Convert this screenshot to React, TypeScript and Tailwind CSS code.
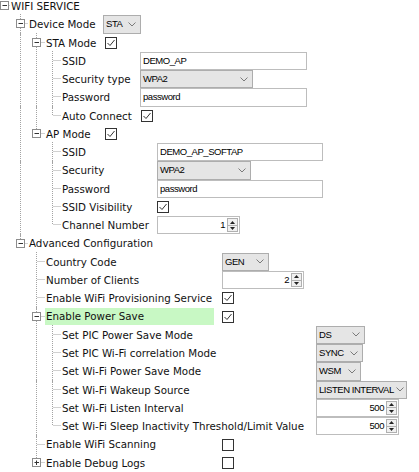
import React from 'react'

type Ctrl =
  | { kind: 'combo'; value: string; w: string }
  | { kind: 'input'; value: string; w: string }
  | { kind: 'spin'; value: string; w: string }
  | { kind: 'check'; checked: boolean }

type Node = {
  label: string
  labelW?: string
  ctrl?: Ctrl
  open?: boolean
  highlight?: boolean
  children?: Node[]
}

const tree: Node = {
  label: 'WIFI SERVICE',
  open: true,
  children: [
    {
      label: 'Device Mode',
      labelW: 'w-[103px]',
      ctrl: { kind: 'combo', value: 'STA', w: 'w-[38px]' },
      open: true,
      children: [
        {
          label: 'STA Mode',
          labelW: 'w-[105px]',
          ctrl: { kind: 'check', checked: true },
          open: true,
          children: [
            { label: 'SSID', labelW: 'w-[140px]', ctrl: { kind: 'input', value: 'DEMO_AP', w: 'w-[167px]' } },
            { label: 'Security type', labelW: 'w-[140px]', ctrl: { kind: 'combo', value: 'WPA2', w: 'w-[113px]' } },
            { label: 'Password', labelW: 'w-[140px]', ctrl: { kind: 'input', value: 'password', w: 'w-[167px]' } },
            { label: 'Auto Connect', labelW: 'w-[141px]', ctrl: { kind: 'check', checked: true } },
          ],
        },
        {
          label: 'AP Mode',
          labelW: 'w-[105px]',
          ctrl: { kind: 'check', checked: true },
          open: true,
          children: [
            { label: 'SSID', labelW: 'w-[157px]', ctrl: { kind: 'input', value: 'DEMO_AP_SOFTAP', w: 'w-[166px]' } },
            { label: 'Security', labelW: 'w-[157px]', ctrl: { kind: 'combo', value: 'WPA2', w: 'w-[94px]' } },
            { label: 'Password', labelW: 'w-[157px]', ctrl: { kind: 'input', value: 'password', w: 'w-[166px]' } },
            { label: 'SSID Visibility', labelW: 'w-[157px]', ctrl: { kind: 'check', checked: true } },
            { label: 'Channel Number', labelW: 'w-[157px]', ctrl: { kind: 'spin', value: '1', w: 'w-[83px]' } },
          ],
        },
      ],
    },
    {
      label: 'Advanced Configuration',
      open: true,
      children: [
        { label: 'Country Code', labelW: 'w-[222px]', ctrl: { kind: 'combo', value: 'GEN', w: 'w-[47px]' } },
        { label: 'Number of Clients', labelW: 'w-[222px]', ctrl: { kind: 'spin', value: '2', w: 'w-[82px]' } },
        { label: 'Enable WiFi Provisioning Service', labelW: 'w-[222px]', ctrl: { kind: 'check', checked: true } },
        {
          label: 'Enable Power Save',
          labelW: 'w-[222px]',
          ctrl: { kind: 'check', checked: true },
          open: true,
          highlight: true,
          children: [
            { label: 'Set PIC Power Save Mode', labelW: 'w-[316px]', ctrl: { kind: 'combo', value: 'DS', w: 'w-[49px]' } },
            { label: 'Set PIC Wi-Fi correlation Mode', labelW: 'w-[316px]', ctrl: { kind: 'combo', value: 'SYNC', w: 'w-[47px]' } },
            { label: 'Set Wi-Fi Power Save Mode', labelW: 'w-[316px]', ctrl: { kind: 'combo', value: 'WSM', w: 'w-[45px]' } },
            { label: 'Set Wi-Fi Wakeup Source', labelW: 'w-[316px]', ctrl: { kind: 'combo', value: 'LISTEN INTERVAL', w: 'w-[91px]' } },
            { label: 'Set Wi-Fi Listen Interval', labelW: 'w-[316px]', ctrl: { kind: 'spin', value: '500', w: 'w-[83px]' } },
            { label: 'Set Wi-Fi Sleep Inactivity Threshold/Limit Value', labelW: 'w-[316px]', ctrl: { kind: 'spin', value: '500', w: 'w-[83px]' } },
          ],
        },
        { label: 'Enable WiFi Scanning', labelW: 'w-[222px]', ctrl: { kind: 'check', checked: false } },
        { label: 'Enable Debug Logs', labelW: 'w-[222px]', ctrl: { kind: 'check', checked: false }, open: false, children: [] },
      ],
    },
  ],
}

// ancNext[c] = does the ancestor at depth c have a following sibling
type Row = { node: Node; depth: number; isLast: boolean; ancNext: boolean[] }

function flatten(node: Node, depth: number, isLast: boolean, ancNext: boolean[], out: Row[]) {
  out.push({ node, depth, isLast, ancNext })
  if (node.children && node.open) {
    const next = [...ancNext, !isLast && depth > 0]
    node.children.forEach((c, i) => {
      flatten(c, depth + 1, i === node.children!.length - 1, next, out)
    })
  }
}

const rows: Row[] = []
flatten(tree, 0, true, [], rows)

const textX = [11, 29, 46, 62]
const LINE = '#a3a3a3'

function Gutter({ row }: { row: Row }) {
  const { depth, isLast, ancNext, node } = row
  const w = textX[depth]
  const xc = 4.5 + 16 * depth
  const hasBox = node.children !== undefined
  const verts: React.ReactNode[] = []
  for (let c = 1; c < depth; c++) {
    if (ancNext[c]) {
      const x = 4.5 + 16 * c
      verts.push(<line key={'a' + c} x1={x} x2={x} y1={-1} y2={20} stroke={LINE} strokeDasharray="1 1" />)
    }
  }
  if (depth > 0) {
    verts.push(<line key="own" x1={xc} x2={xc} y1={-1} y2={isLast ? 8.5 : 20} stroke={LINE} strokeDasharray="1 1" />)
  }
  const legStart = hasBox ? xc + 5 : xc + 1
  return (
    <svg width={w} height={18} className="shrink-0 overflow-visible">
      {verts}
      <line x1={legStart} x2={w - 1} y1={8.5} y2={8.5} stroke={LINE} strokeDasharray="1 1" />
      {hasBox && (
        <g>
          <rect x={xc - 4} y={4.5} width={8} height={8} fill="#fff" stroke="#8c8c8c" />
          <line x1={xc - 2} x2={xc + 2.5} y1={8.5} y2={8.5} stroke="#333" />
          {!node.open && <line x1={xc} x2={xc} y1={6.5} y2={11} stroke="#333" />}
        </g>
      )}
    </svg>
  )
}

function Chevron() {
  return (
    <svg width="8" height="5" className="shrink-0">
      <polyline points="0.5,0.5 4,4 7.5,0.5" fill="none" stroke="#7a7a7a" />
    </svg>
  )
}

function Check({ checked }: { checked: boolean }) {
  return (
    <div className="flex h-[12px] w-[12px] shrink-0 items-center justify-center border border-[#333] bg-white">
      {checked && (
        <svg width="10" height="10">
          <polyline points="1.5,5 4,7.5 8.5,2" fill="none" stroke="#333" strokeWidth="1" />
        </svg>
      )}
    </div>
  )
}

const valueFont = "font-['Liberation_Sans',Arial,sans-serif] text-[9.5px] tracking-[-0.45px] text-black"

function Control({ ctrl }: { ctrl: Ctrl }) {
  if (ctrl.kind === 'check') return <Check checked={ctrl.checked} />
  if (ctrl.kind === 'combo')
    return (
      <div className={`flex h-full shrink-0 items-center justify-between gap-[2px] border border-[#adadad] bg-[#e5e5e5] pl-[2px] pr-[4px] ${ctrl.w} ${valueFont}`}>
        <span className="whitespace-nowrap">{ctrl.value}</span>
        <Chevron />
      </div>
    )
  if (ctrl.kind === 'input')
    return (
      <div className={`flex h-full shrink-0 items-center border border-[#bdbdbd] bg-white pl-[2px] ${ctrl.w} ${valueFont}`}>
        <span className="whitespace-nowrap">{ctrl.value}</span>
      </div>
    )
  return (
    <div className={`flex h-full shrink-0 items-stretch border border-[#bdbdbd] bg-white ${ctrl.w} ${valueFont}`}>
      <span className="flex flex-1 items-center justify-end pr-[2px]">{ctrl.value}</span>
      <div className="my-[1px] mr-[1px] flex w-[11px] flex-col border border-[#b0b0b0] bg-[#f0f0f0]">
        <div className="flex flex-1 items-center justify-center border-b border-[#b0b0b0]">
          <svg width="5" height="3">
            <polygon points="0,3 2.5,0 5,3" fill="#222" />
          </svg>
        </div>
        <div className="flex flex-1 items-center justify-center">
          <svg width="5" height="3">
            <polygon points="0,0 2.5,3 5,0" fill="#222" />
          </svg>
        </div>
      </div>
    </div>
  )
}

export default function App() {
  return (
    <div className="h-[472px] w-[419px] overflow-hidden bg-white font-['DejaVu_Sans',Verdana,sans-serif] text-[10.3px] text-[#111]">
      <div className="-mt-[3px] flex flex-col">
        {rows.map((row, i) => (
          <div key={i} className="flex h-[18.28px] items-center">
            <div className={`flex h-full shrink-0 items-center ${row.node.labelW ?? ''}`}>
              <Gutter row={row} />
              {row.node.highlight ? (
                <span className="-ml-[1px] flex h-[17px] w-[169px] items-center whitespace-nowrap bg-[#c8f8c4] pl-[1px]">
                  {row.node.label}
                </span>
              ) : (
                <span className="whitespace-nowrap leading-none">{row.node.label}</span>
              )}
            </div>
            {row.node.ctrl && <Control ctrl={row.node.ctrl} />}
          </div>
        ))}
      </div>
    </div>
  )
}
